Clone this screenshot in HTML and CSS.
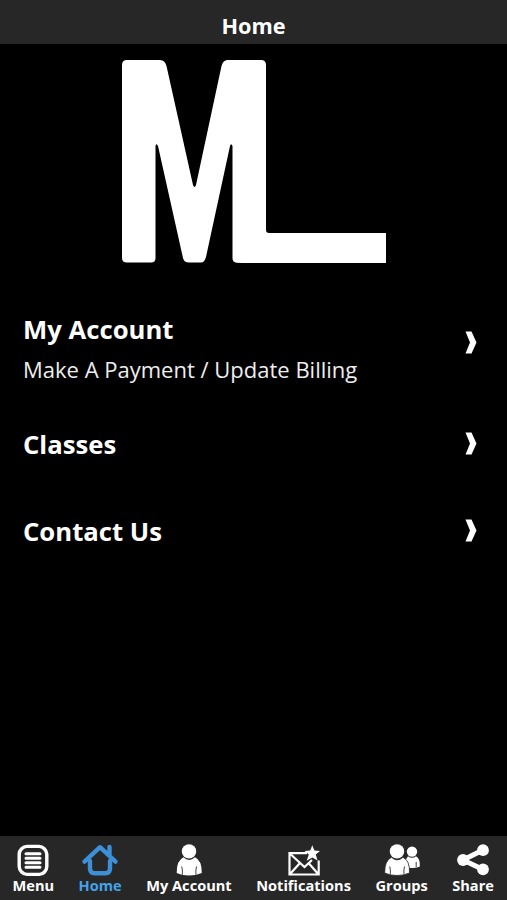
FILE: index.html
```html
<!DOCTYPE html>
<html lang="en">
<head>
<meta charset="utf-8">
<title>Home</title>
<link rel="stylesheet" href="styles.css">
</head>
<body>
<div class="app">
  <header class="header"><h1 class="header-title">Home</h1></header>
  <main class="content">
    <svg class="logo" viewBox="0 0 264 203" role="img" aria-label="ML">
      <path fill="#fff" d="M5 0H38Q43 0 44.500 6L71 125Q72.500 129 74 125L99.500 6Q101 0 105.500 0H139Q144 0 144 5V170Q144 173 147 173H264V203H120Q110 202.500 114 202.500Q110.500 202 110.500 198V86Q109 82.500 108 86L84 197Q82.500 202.500 79 202.500H67Q62 202.500 61 198L36 86Q34 82.500 33.500 86V198Q33.500 202.500 29 202.500H5Q0 202.500 0 198V5Q0 0 5 0Z"/>
    </svg>
    <nav class="list">
      <a class="row row-tall">
        <span class="row-text"><span class="row-title">My Account</span><span class="row-sub">Make A Payment / Update Billing</span></span>
        <svg class="chevron" viewBox="0 0 12 23"><path d="M.5 .5H6.500L11.500 11.500 6.500 22.500H.5L5 11.500Z"/></svg>
      </a>
      <a class="row">
        <span class="row-title">Classes</span>
        <svg class="chevron" viewBox="0 0 12 23"><path d="M.5 .5H6.500L11.500 11.500 6.500 22.500H.5L5 11.500Z"/></svg>
      </a>
      <a class="row">
        <span class="row-title">Contact Us</span>
        <svg class="chevron" viewBox="0 0 12 23"><path d="M.5 .5H6.500L11.500 11.500 6.500 22.500H.5L5 11.500Z"/></svg>
      </a>
    </nav>
  </main>
  <nav class="tabs">
    <a class="tab">
      <svg class="icon" viewBox="0 0 40 34"><path class="line" stroke-width="3.400" d="M14 2.400H26Q29 2.400 31.300 4.700T33.800 10V22.500Q33.800 25.500 31.500 28T26 30.400H14Q11 30.400 8.600 28T6.200 22.500V10Q6.200 7 8.600 4.700T14 2.400Z"/><path class="line" stroke-width="3" d="M13 9.700H27M13 14.200H27M13 18.700H27M13 23.300H27"/></svg>
      <span class="label">Menu</span>
    </a>
    <a class="tab active">
      <svg class="icon" viewBox="0 0 40 34"><path class="line" stroke-width="4.400" d="M4.500 17.700L20 3.200 35.500 17.700M29.500 3V11M10 17V25Q10.500 29.300 14.500 29.300H25.500Q29.500 29.300 30 25V17"/></svg>
      <span class="label">Home</span>
    </a>
    <a class="tab">
      <svg class="icon" viewBox="0 0 40 34"><circle cx="20" cy="7.400" r="7.200"/><path d="M14.500 13.300Q20 18.500 26 13.300Q33 16.500 32.800 29Q27 31.500 20 31.500T7.700 29Q7.500 16.500 14.500 13.300Z"/><path class="seam" d="M12.500 22.500Q13.800 25 13.300 31M27.800 22.500Q26.500 25 27 31"/></svg>
      <span class="label">My Account</span>
    </a>
    <a class="tab">
      <svg class="icon" viewBox="0 0 40 34"><path class="mail" d="M23 9.200H5.500V30.500H34.700V16.500M5.500 9.200L20.500 23 28 16M6 30L16 19M24.500 19L34.200 30"/><path d="M28.300 1.200L30.400 6.600 36 7 31.700 10.600 33.600 16.600 28.300 13.400 22.700 16.800 24.800 10.600 20.500 7 26.200 6.600Z"/></svg>
      <span class="label">Notifications</span>
    </a>
    <a class="tab">
      <svg class="icon" viewBox="0 0 40 34"><circle cx="30" cy="7.600" r="5.200"/><path d="M26 12.200Q30 15.500 34 12.200Q38.300 14.500 37.800 22.500Q34 24.500 27.500 24Q26.500 18.500 23.500 16Z"/><path class="seam" d="M34.200 18V23.500"/><circle cx="15" cy="7.400" r="7.200"/><path class="front" d="M9.500 13.300Q15 18.500 21 13.300Q28 16.500 27.500 29Q22 31.500 15 31.500T2.700 29Q2.500 16.500 9.500 13.300Z"/><path class="seam" d="M7.500 22.500Q8.800 25 8.300 31M22.800 22.500Q21.500 25 22 31"/></svg>
      <span class="label">Groups</span>
    </a>
    <a class="tab">
      <svg class="icon" viewBox="0 0 40 34"><path class="line" stroke-width="5" d="M30 6L10 16 30 25.500"/><circle cx="30" cy="6.200" r="5.900"/><circle cx="10" cy="16" r="5.900"/><circle cx="30" cy="25.300" r="5.900"/></svg>
      <span class="label">Share</span>
    </a>
  </nav>
</div>
</body>
</html>
```

FILE: styles.css
```css
* { box-sizing: border-box; }
body { margin: 0; background: #000; color: #fff; font-family: "Open Sans", "Noto Sans", sans-serif; }
.app { display: flex; flex-direction: column; height: 900px; }
.header { height: 44px; padding-top: 8px; background: #272727; text-align: center; }
.header-title { margin: 0; font-size: 21.7px; line-height: 36px; font-weight: 700; }
.content { flex: 1; display: flex; flex-direction: column; }
.logo { width: 264px; height: 203px; margin: 16px auto 0; }
.list { margin-top: 36px; padding: 0 30px 0 23px; }
.row { display: flex; align-items: center; justify-content: space-between; height: 87px; }
.row > .row-title { padding-top: 2px; }
.row-tall { height: 101px; padding-bottom: 14px; }
.row-text { display: flex; flex-direction: column; padding-top: 14px; }
.row-title { font-size: 25.7px; line-height: 34px; font-weight: 700; }
.row-sub { margin-top: 4px; font-size: 22px; line-height: 36px; color: #eee; }
.chevron { width: 12px; height: 23px; fill: #fff; }
.tabs { display: flex; justify-content: space-between; height: 64px; padding: 8px 13px 0 12.5px; background: #272727; }
.tab { display: flex; flex-direction: column; align-items: center; color: #fff; }
.active { color: #3d8fd6; }
.active .label { color: #43a3ea; }
.icon { width: 40px; height: 34px; margin: 0 -4px; fill: currentColor; }
.line { fill: none; stroke: currentColor; stroke-linecap: round; stroke-linejoin: round; }
.seam { fill: none; stroke: #555; stroke-width: 1.1; }
.front { stroke: #272727; stroke-width: .8; }
.mail { fill: none; stroke: currentColor; stroke-width: 2.2; }
.label { margin-top: -3px; font-size: 14.6px; line-height: 20px; font-weight: 700; white-space: nowrap; }
```
